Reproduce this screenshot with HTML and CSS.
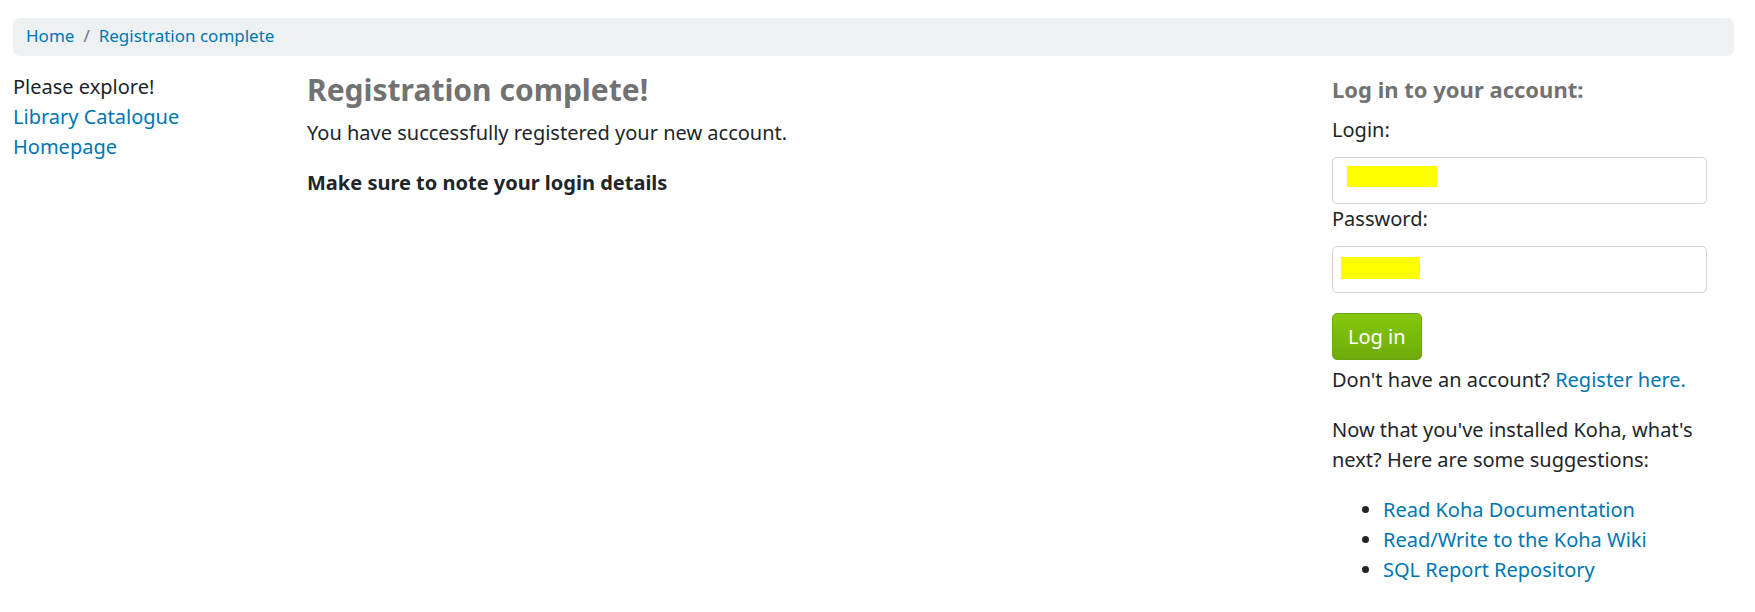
FILE: index.html
```html
<!DOCTYPE html>
<html lang="en">
<head>
    <meta charset="UTF-8">
    <meta name="viewport" content="width=device-width, initial-scale=1.0">
    <title>Registration complete</title>
    <link rel="stylesheet" href="styles.css">
</head>
<body>
    <div class="page">
        <nav class="breadcrumbs">
            <a href="#">Home</a>
            <span class="sep">/</span>
            <a href="#">Registration complete</a>
        </nav>

        <div class="layout">
            <aside class="nav-col">
                <p>Please explore!</p>
                <a href="#">Library Catalogue</a>
                <a href="#">Homepage</a>
            </aside>

            <main class="main-col">
                <h1>Registration complete!</h1>
                <p>You have successfully registered your new account.</p>
                <p class="note">Make sure to note your login details</p>
            </main>

            <aside class="login-col">
                <h2>Log in to your account:</h2>
                <form class="login-form">
                    <label for="userid">Login:</label>
                    <div class="field">
                        <input type="text" id="userid" name="userid">
                        <span class="redact redact-login"></span>
                    </div>
                    <label for="password">Password:</label>
                    <div class="field">
                        <input type="password" id="password" name="password">
                        <span class="redact redact-pass"></span>
                    </div>
                    <button type="submit" class="btn-login">Log in</button>
                </form>
                <p class="register">Don't have an account? <a href="#">Register here.</a></p>
                <p>Now that you've installed Koha, what's next? Here are some suggestions:</p>
                <ul class="suggestions">
                    <li><a href="#">Read Koha Documentation</a></li>
                    <li><a href="#">Read/Write to the Koha Wiki</a></li>
                    <li><a href="#">SQL Report Repository</a></li>
                </ul>
            </aside>
        </div>
    </div>
</body>
</html>
```

FILE: styles.css
```css
body {
    font-family: "Noto Sans", "Open Sans", sans-serif;
    font-size: 20px;
    line-height: 1.5;
    color: #212529;
    background-color: #fff;
    margin: 0;
    padding: 0;
}

a {
    color: #0076b2;
    text-decoration: none;
}

p {
    margin: 0 0 20px;
}

.page {
    padding: 18px 21px 0 13px;
}

.breadcrumbs {
    background-color: #eef1f2;
    border-radius: 7px;
    height: 38px;
    padding: 0 13px 2px;
    box-sizing: border-box;
    display: flex;
    align-items: center;
    font-size: 17px;
}

.breadcrumbs .sep {
    color: #6c757d;
    padding: 0 9px;
}

.layout {
    display: grid;
    grid-template-columns: 294px 1fr 375px;
    padding-right: 27px;
    margin-top: 16px;
}

.nav-col {
    display: flex;
    flex-direction: column;
}

.nav-col p {
    margin: 0;
}

h1 {
    font-size: 30px;
    line-height: 36px;
    font-weight: 700;
    color: #727272;
    margin: 0 0 10px;
}

.main-col .note {
    font-weight: 700;
}

h2 {
    font-size: 22px;
    line-height: 1.2;
    font-weight: 700;
    color: #727272;
    margin: 4px 0 13px;
}

.login-form {
    display: flex;
    flex-direction: column;
    align-items: flex-start;
}

.login-form label {
    margin-bottom: 12px;
}

.field {
    position: relative;
    width: 100%;
}

.field input {
    display: block;
    width: 100%;
    height: 47px;
    box-sizing: border-box;
    border: 1px solid #ced4da;
    border-radius: 5px;
    margin: 0;
}

.redact {
    position: absolute;
    background-color: #ffff00;
}

.redact-login {
    left: 15px;
    top: 9px;
    width: 90px;
    height: 21px;
}

.redact-pass {
    left: 9px;
    top: 11px;
    width: 79px;
    height: 22px;
}

.btn-login {
    margin-top: 20px;
    height: 47px;
    padding: 0 15px;
    font-family: inherit;
    font-size: 20px;
    color: #fff;
    background: linear-gradient(to bottom, #86c80e, #6dab0a);
    border: 1px solid #69a50c;
    border-radius: 5px;
    cursor: pointer;
}

.register {
    margin-top: 5px;
}

.suggestions {
    margin: 0;
    padding-left: 51px;
}
```
